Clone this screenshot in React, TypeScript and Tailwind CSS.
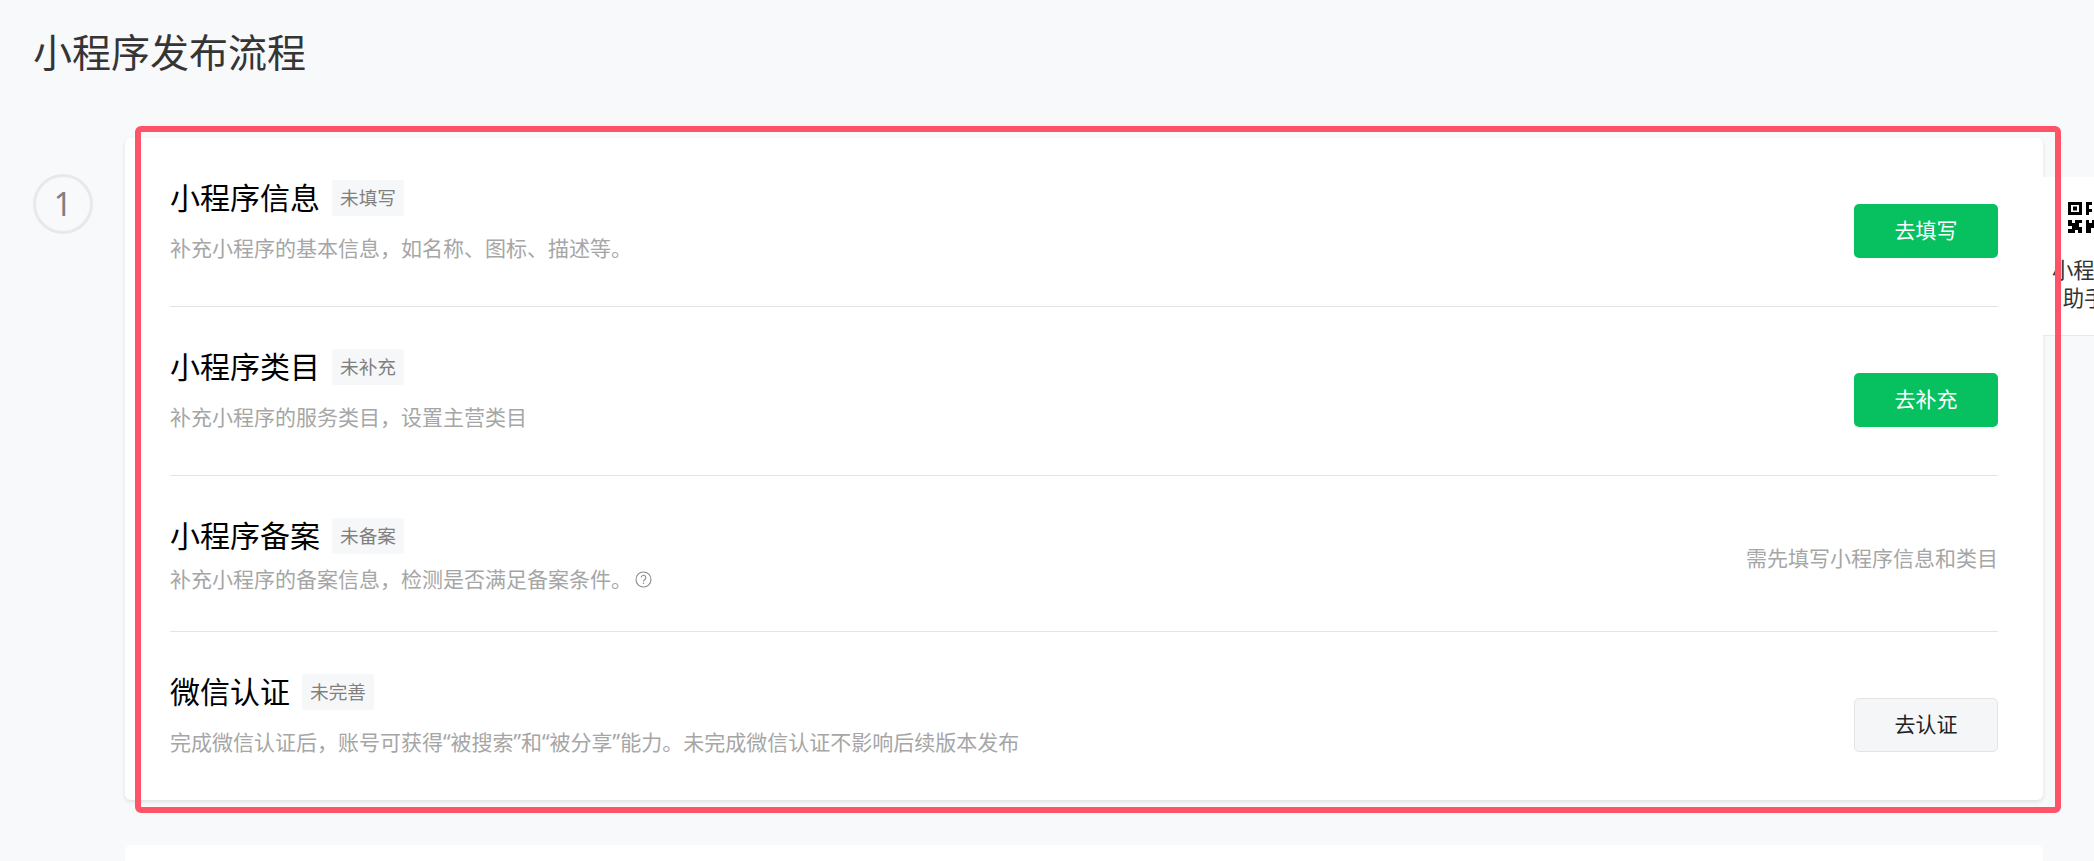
const font = '"Noto Sans", "Noto Sans CJK SC", sans-serif'

const items = [
  {
    title: '小程序信息',
    tag: '未填写',
    desc: '补充小程序的基本信息，如名称、图标、描述等。',
    action: 'primary',
    label: '去填写',
  },
  {
    title: '小程序类目',
    tag: '未补充',
    desc: '补充小程序的服务类目，设置主营类目',
    action: 'primary',
    label: '去补充',
  },
  {
    title: '小程序备案',
    tag: '未备案',
    desc: '补充小程序的备案信息，检测是否满足备案条件。',
    action: 'text',
    label: '需先填写小程序信息和类目',
    help: true,
  },
  {
    title: '微信认证',
    tag: '未完善',
    desc: '完成微信认证后，账号可获得“被搜索”和“被分享”能力。未完成微信认证不影响后续版本发布',
    action: 'default',
    label: '去认证',
  },
]

function HelpIcon() {
  return (
    <svg width="17" height="17" viewBox="0 0 17 17" fill="none" className="ml-[3px] shrink-0">
      <circle cx="8.5" cy="8.5" r="7.5" stroke="#8c8c8c" strokeWidth="1.1" />
      <path d="M6.2 6.6a2.3 2.3 0 1 1 3.6 1.9c-.9.6-1.3 1-1.3 1.9" stroke="#8c8c8c" strokeWidth="1.1" />
      <rect x="7.9" y="11.6" width="1.2" height="1.3" fill="#8c8c8c" />
    </svg>
  )
}

function QrIcon() {
  return (
    <svg width="32" height="31" viewBox="0 0 32 31" fill="#000" className="shrink-0">
      <path fillRule="evenodd" d="M0 0h14v13H0zM3 3v7h8V3z" />
      <rect x="5" y="4.5" width="4" height="4" />
      <path d="M18 0h6v3h-3v4h3v3h-3v3h-3zM26 0h6v6h-6z" />
      <path d="M0 18h4v3h3v-3h7v3h-3v4h3v6H10v-3H7v3H0v-4h4v-3H0z" />
      <path d="M18 18h3v3h3v-3h8v13h-6v-5h-3v5h-5z" />
    </svg>
  )
}

export default function App() {
  return (
    <div
      className="relative w-full h-[861px] overflow-hidden bg-[#f8f9fb]"
      style={{ fontFamily: font }}
    >
      <div className="pl-[33px] pr-[51px] pt-[30px]">
        <h1 className="text-[39px] leading-[44px] text-[#353535] font-normal mb-[64px]">小程序发布流程</h1>

        <div className="flex gap-[32px]">
          <div className="mt-[36px] w-[60px] h-[60px] shrink-0 rounded-full border-[3px] border-[#e8e9eb] flex items-center justify-center text-[32px] text-[#808080]">
            1
          </div>

          <div className="flex-1 min-w-0">
            <div className="h-[662px] bg-white rounded-[6px] px-[45px] shadow-[0_2px_4px_rgba(0,0,0,0.1)]">
              {items.map((item, i) => (
                <div
                  key={i}
                  className={`flex justify-between items-center pt-[42px] border-b-[1px] border-[#e3e4e6] last:border-b-0 ${item.help ? 'pb-[31px]' : 'pb-[24px]'}`}
                >
                  <div className={item.help ? 'h-[82px]' : 'h-[102px]'}>
                    <div className="flex items-center h-[36px]">
                      <span className="text-[30px] leading-[40px] text-black">{item.title}</span>
                      <span className="ml-[12px] h-[36px] px-[8px] rounded-[3px] bg-[#f6f7f9] text-[18.67px] leading-[36px] text-[#808080]">
                        {item.tag}
                      </span>
                    </div>
                    <div className={`flex items-center text-[21px] leading-[32px] text-[#a6a6a6] ${item.help ? 'mt-[9px]' : 'mt-[16px]'}`}>
                      {item.desc}
                      {item.help && <HelpIcon />}
                    </div>
                  </div>

                  {item.action === 'primary' && (
                    <button className="w-[144px] h-[54px] rounded-[5px] bg-[#07c160] text-white text-[21px]">
                      {item.label}
                    </button>
                  )}
                  {item.action === 'default' && (
                    <button className="w-[144px] h-[54px] rounded-[5px] bg-[#f5f6f8] border border-[#e3e4e6] text-[#222] text-[21px]">
                      {item.label}
                    </button>
                  )}
                  {item.action === 'text' && (
                    <span className="text-[21px] text-[#a6a6a6]">{item.label}</span>
                  )}
                </div>
              ))}
            </div>

            <div className="mt-[45px] h-[200px] bg-white rounded-[6px]" />
          </div>
        </div>
      </div>

      {/* floating helper on the right edge */}
      <div className="absolute left-[2043px] top-[177px] w-[82px] h-[159px] bg-white border-b border-[#e8e9eb] flex flex-col items-center pt-[25px]">
        <QrIcon />
        <div className="mt-[23px] text-[21.33px] leading-[28px] text-[#333] text-center whitespace-nowrap">
          小程序
          <br />
          助手
        </div>
      </div>

      {/* red highlight frame */}
      <div className="absolute left-[135px] top-[126px] w-[1926px] h-[687px] border-[6px] border-[#ff5468] rounded-[6px]" />
    </div>
  )
}
